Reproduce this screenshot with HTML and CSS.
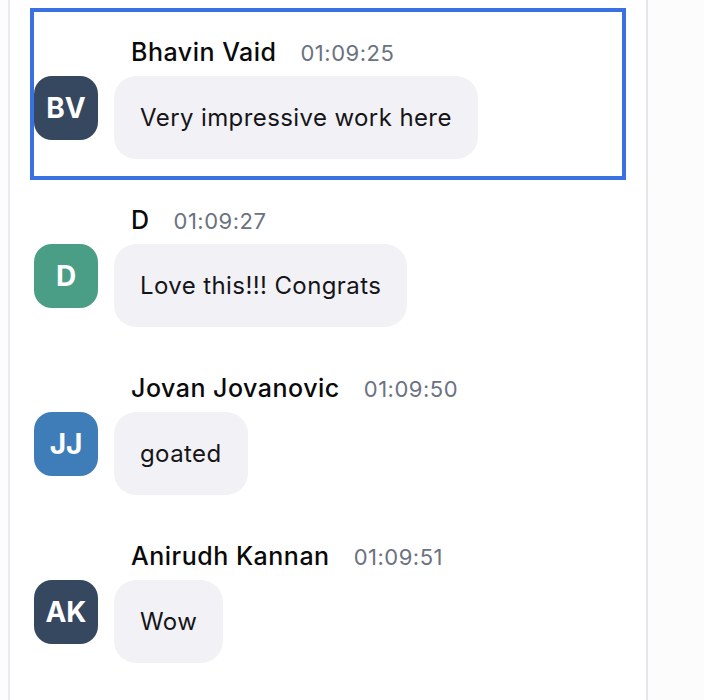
FILE: index.html
```html
<!DOCTYPE html>
<html lang="en">
<head>
    <meta charset="UTF-8">
    <meta name="viewport" content="width=device-width, initial-scale=1.0">
    <title>Comments</title>
    <link rel="stylesheet" href="styles.css">
</head>
<body>
    <div class="chat-panel">
        <div class="message-list">
            <div class="message selected">
                <div class="message-meta">
                    <span class="author">Bhavin Vaid</span>
                    <span class="time">01:09:25</span>
                </div>
                <div class="avatar slate">BV</div>
                <div class="bubble">Very impressive work here</div>
            </div>
            <div class="message">
                <div class="message-meta">
                    <span class="author">D</span>
                    <span class="time">01:09:27</span>
                </div>
                <div class="avatar green">D</div>
                <div class="bubble">Love this!!! Congrats</div>
            </div>
            <div class="message">
                <div class="message-meta">
                    <span class="author">Jovan Jovanovic</span>
                    <span class="time">01:09:50</span>
                </div>
                <div class="avatar blue">JJ</div>
                <div class="bubble">goated</div>
            </div>
            <div class="message">
                <div class="message-meta">
                    <span class="author">Anirudh Kannan</span>
                    <span class="time">01:09:51</span>
                </div>
                <div class="avatar slate">AK</div>
                <div class="bubble">Wow</div>
            </div>
        </div>
    </div>
</body>
</html>
```

FILE: styles.css
```css
body {
    font-family: Inter, "Noto Sans", sans-serif;
    background-color: #fcfcfc;
    margin: 0;
    padding: 0;
    height: 100vh;
    overflow: hidden;
}
.chat-panel {
    width: 636px;
    margin-left: 8px;
    height: 100%;
    background: #fff;
    border-left: 2px solid #ebeaf0;
    border-right: 2px solid #e6e4ec;
}
.message-list {
    padding: 10px 22px 0 22px;
}
.message {
    display: grid;
    grid-template-columns: 64px auto;
    column-gap: 16px;
    row-gap: 8px;
    justify-content: start;
    padding: 26px 2px 19px 2px;
}
.message.selected {
    outline: 4px solid #3872e0;
    outline-offset: -2px;
}
.message-meta {
    grid-column: 2;
    padding-left: 17px;
    display: flex;
    align-items: baseline;
    height: 32px;
    line-height: 32px;
}
.author {
    font-size: 25px;
    font-weight: 500;
    letter-spacing: 0.5px;
    color: #0a0a0a;
}
.time {
    font-size: 22px;
    letter-spacing: 0.5px;
    color: #6b7280;
    margin-left: 24px;
}
.avatar {
    grid-column: 1;
    width: 64px;
    height: 64px;
    border-radius: 18px;
    color: white;
    font-size: 28px;
    font-weight: 700;
    display: flex;
    justify-content: center;
    align-items: center;
}
.avatar.slate {
    background: #364760;
}
.avatar.green {
    background: #4a9e86;
}
.avatar.blue {
    background: #3f7db9;
}
.bubble {
    grid-column: 2;
    justify-self: start;
    background: #f2f1f6;
    color: #151518;
    font-size: 24px;
    letter-spacing: 0.4px;
    line-height: 33px;
    padding: 25px 26px;
    border-radius: 22px;
}
```
